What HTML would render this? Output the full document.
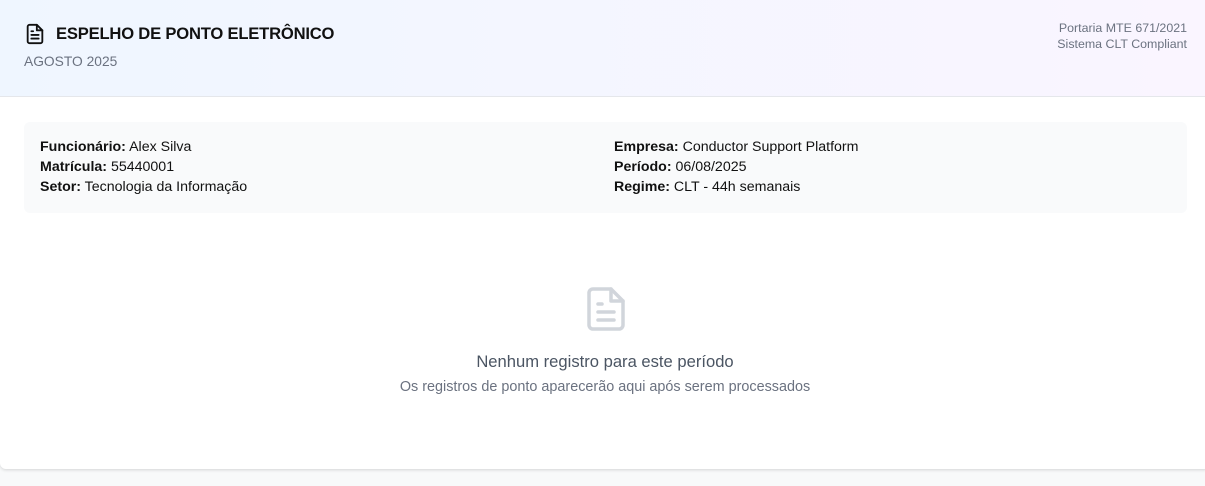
<!DOCTYPE html>
<html><head><meta charset="utf-8"><style>
*{margin:0;padding:0;box-sizing:border-box}
body{width:1205px;height:486px;background:#f8f9fa;font-family:"Liberation Sans",Arial,sans-serif;overflow:hidden;position:relative}
.card{position:absolute;left:0;top:0;width:1210px;height:469px;background:#fff;border-radius:0 0 6px 6px;box-shadow:0 1px 3px rgba(0,0,0,.15);overflow:hidden}
.hdr{height:97px;background:linear-gradient(90deg,#eff6ff,#faf5ff);border-bottom:1px solid #e5e7eb;position:relative}
.t{position:absolute;left:24px;top:23px;display:flex;align-items:center;font-size:16.6px;font-weight:bold;color:#111;letter-spacing:-.2px}
.t svg{margin-right:10px}
.sub{position:absolute;left:24px;top:54px;font-size:13.8px;color:#6b7280}
.r{position:absolute;right:23px;top:20px;text-align:right;font-size:12.4px;color:#6b7280;line-height:16px}
.info{position:absolute;left:24px;top:122px;width:1163px;height:91px;background:#f9fafb;border-radius:6px;font-size:14.2px;color:#111;line-height:20px}
.c1{position:absolute;left:16px;top:15px}.c2{position:absolute;left:590px;top:15px}
.empty{position:absolute;left:0;width:1210px;text-align:center}
</style></head><body>
<div class="card">
<div class="hdr">
<div class="t"><svg width="22" height="22" viewBox="0 0 24 24" fill="none" stroke="#111" stroke-width="2" stroke-linecap="round" stroke-linejoin="round"><path d="M14 2H6a2 2 0 0 0-2 2v16a2 2 0 0 0 2 2h12a2 2 0 0 0 2-2V8z"/><path d="M14 2v6h6"/><path d="M8 13h8M8 17h8M8 9h2"/></svg>ESPELHO DE PONTO ELETRÔNICO</div>
<div class="sub">AGOSTO 2025</div>
<div class="r">Portaria MTE 671/2021<br>Sistema CLT Compliant</div>
</div>
<div class="info">
<div class="c1"><b>Funcionário:</b> Alex Silva<br><b>Matrícula:</b> 55440001<br><b>Setor:</b> Tecnologia da Informação</div>
<div class="c2"><b>Empresa:</b> Conductor Support Platform<br><b>Período:</b> 06/08/2025<br><b>Regime:</b> CLT - 44h semanais</div>
</div>
<svg style="position:absolute;left:585px;top:286px" width="42" height="46" viewBox="0 0 42 46" fill="none" stroke="#d1d5db" stroke-width="3.5" stroke-linecap="round" stroke-linejoin="round"><path d="M26 3H8a4 4 0 0 0-4 4v32a4 4 0 0 0 4 4h26a4 4 0 0 0 4-4V15z"/><path d="M26 3v12h12" /><path d="M13 26h16M13 34h16M13 18h4"/></svg>
<div class="empty" style="top:352px;font-size:16.6px;color:#4b5563">Nenhum registro para este período</div>
<div class="empty" style="top:379px;font-size:14.4px;color:#6b7280">Os registros de ponto aparecerão aqui após serem processados</div>
</div>
</body></html>
